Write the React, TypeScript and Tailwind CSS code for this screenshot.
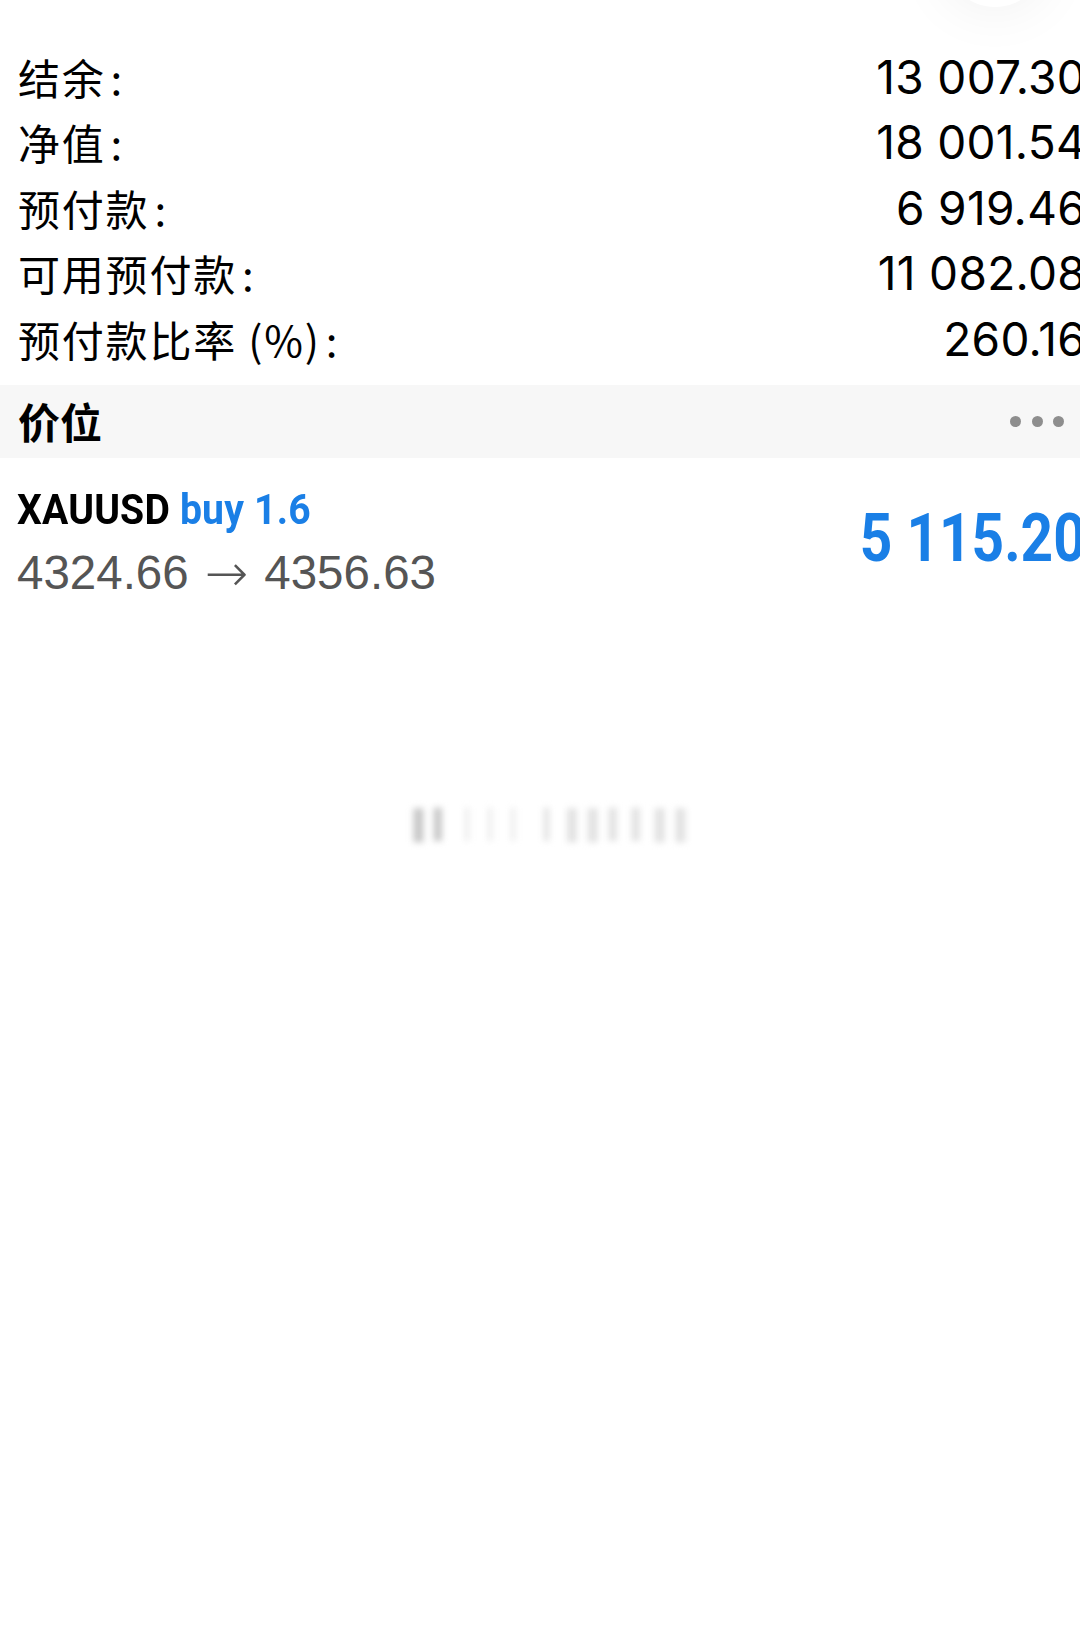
import React from "react";

const rows: [string, string][] = [
  ["结余", "13 007.30"],
  ["净值", "18 001.54"],
  ["预付款", "6 919.46"],
  ["可用预付款", "11 082.08"],
  ["预付款比率 (%)", "260.16"],
];

const cjk = { fontFamily: '"Noto Sans CJK SC", "Noto Sans", sans-serif' };
const num = { fontFamily: 'Inter, "Noto Sans", sans-serif' };
const cond = { fontFamily: 'Roboto, "Noto Sans", sans-serif' };
const helv = { fontFamily: '"Liberation Sans", Arial, sans-serif' };
const arrow = { fontFamily: '"DejaVu Sans", sans-serif' };

export default function App() {
  return (
    <div className="relative w-[1080px] h-[1648px] overflow-hidden bg-white">
      <div className="absolute left-[945px] top-[-93px] w-[100px] h-[100px] rounded-full bg-white shadow-[0_0_60px_rgba(0,0,0,0.07)]" />
      <div className="pt-[44px] pb-[3px]">
        {rows.map(([l, v]) => (
          <div key={l} className="flex items-center justify-between h-[65.5px] pl-[18px] mr-[-6px]">
            <span className="text-[42px] text-black leading-none tracking-[1.8px]" style={cjk}>
              {l}
              <span className="ml-[5px]">:</span>
            </span>
            <span className="text-[46px] text-black leading-none tracking-[0.3px]" style={num}>{v}</span>
          </div>
        ))}
      </div>
      <div className="mt-[10px] h-[73px] bg-[#f7f7f7] flex items-center justify-between pl-[18px] pr-[16px]">
        <span className="text-[42px] font-bold text-black leading-none" style={cjk}>价位</span>
        <div className="flex items-center gap-[10.5px]">
          <span className="w-[11px] h-[11px] rounded-full bg-[#8e8e8e]" />
          <span className="w-[11px] h-[11px] rounded-full bg-[#8e8e8e]" />
          <span className="w-[11px] h-[11px] rounded-full bg-[#8e8e8e]" />
        </div>
      </div>
      <div className="flex items-center justify-between pl-[17px] mr-[-6px] pt-[24px]">
        <div className="flex flex-col">
          <div className="text-[43px] font-bold leading-[54px] tracking-[0.2px] inline-block origin-left scale-x-[0.91] whitespace-nowrap" style={cond}>
            <span className="text-black">XAUUSD</span>{" "}
            <span className="text-[#1a7fe6]">buy 1.6</span>
          </div>
          <div className="text-[47.5px] text-[#555555] leading-[62px] mt-[6px] flex items-center" style={helv}>
            <span>4324.66</span>
            <span className="font-extralight text-[52px] mx-[16px] leading-none" style={arrow}>→</span>
            <span>4356.63</span>
          </div>
        </div>
        <div className="text-[66px] font-bold text-[#1a7fe6] leading-none inline-block origin-right scale-x-[0.86] mb-[8px]" style={cond}>5 115.20</div>
      </div>
      <div className="flex justify-center mt-[200px] pl-[30px]">
        <span className="text-[28px] text-[#e2e2e2] blur-[3px] tracking-[1px]" style={helv}>
          <span className="text-[#c8c8c8]">▌▍</span> ▏▏▏ ▎▌▌▍▍▌▌
        </span>
      </div>
    </div>
  );
}
